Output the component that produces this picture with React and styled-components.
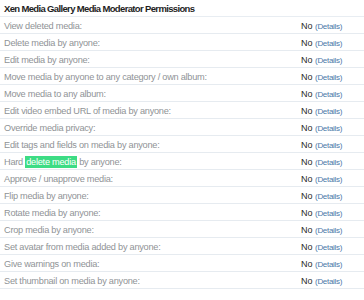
import React from 'react'
import styled, { createGlobalStyle } from 'styled-components'

const GlobalStyle = createGlobalStyle`
    body {
        margin: 0;
        background: #ffffff;
        font-family: "Liberation Sans", Arial, sans-serif;
    }
`

const permissions = [
    'View deleted media:',
    'Delete media by anyone:',
    'Edit media by anyone:',
    'Move media by anyone to any category / own album:',
    'Move media to any album:',
    'Edit video embed URL of media by anyone:',
    'Override media privacy:',
    'Edit tags and fields on media by anyone:',
    'HARD',
    'Approve / unapprove media:',
    'Flip media by anyone:',
    'Rotate media by anyone:',
    'Crop media by anyone:',
    'Set avatar from media added by anyone:',
    'Give warnings on media:',
    'Set thumbnail on media by anyone:',
]

export default function App() {
    return (
        <Wrapper>
            <GlobalStyle />
            <Title>Xen Media Gallery Media Moderator Permissions</Title>
            {permissions.map((label) => (
                <Row key={label}>
                    <Label>
                        {label === 'HARD' ? (
                            <>Hard <Highlight>delete media</Highlight> by anyone:</>
                        ) : label}
                    </Label>
                    <Value>
                        No <Details href="#">(Details)</Details>
                    </Value>
                </Row>
            ))}
        </Wrapper>
    )
}

const Wrapper = styled.div`
    width: 364px;
`

const Title = styled.div`
    height: 17px;
    line-height: 18px;
    padding-left: 4px;
    font-size: 9.5px;
    font-weight: bold;
    letter-spacing: -0.65px;
    color: #1e1e1e;
    border-bottom: 1px solid #e8edf2;
    box-sizing: border-box;
`

const Row = styled.div`
    display: flex;
    align-items: center;
    height: 17px;
    padding-left: 4px;
    padding-top: 1px;
    border-bottom: 1px solid #e6ebf0;
    box-sizing: border-box;
`

const Label = styled.div`
    flex: 1;
    font-size: 9.2px;
    letter-spacing: -0.25px;
    color: #8f9396;
    white-space: nowrap;
`

const Highlight = styled.span`
    background: #3ddc84;
    color: #ffffff;
    padding: 1px 1px;
`

const Value = styled.div`
    width: 63px;
    font-size: 9px;
    color: #2a2a2a;
    white-space: nowrap;
`

const Details = styled.a`
    font-size: 8px;
    letter-spacing: -0.3px;
    color: #4a79a8;
    text-decoration: none;
`
